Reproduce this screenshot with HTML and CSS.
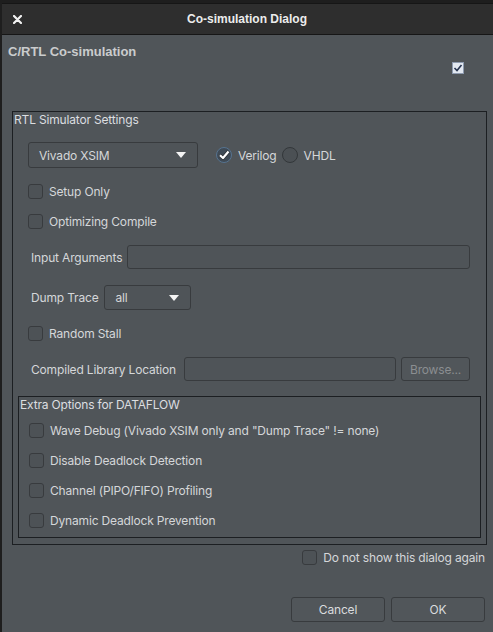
FILE: index.html
```html
<!DOCTYPE html>
<html>
<head>
<meta charset="utf-8">
<link rel="stylesheet" href="styles.css">
</head>
<body>
<div class="dialog">
  <div class="titlebar">
    <svg class="close" width="9" height="9" viewBox="0 0 9 9"><path d="M1 1 L8 8 M8 1 L1 8" stroke="#f2f2f2" stroke-width="2.2" stroke-linecap="round"/></svg>
    <span class="title">Co-simulation Dialog</span>
  </div>
  <div class="body">
    <h1 class="heading">C/RTL Co-simulation</h1>
    <div class="enable-row">
      <span class="mini-check"><svg width="10" height="10" viewBox="0 0 10 10"><path d="M1.5 5 L4 7.5 L8.5 2" fill="none" stroke="#27344f" stroke-width="1.6"/></svg></span>
    </div>
    <div class="group outer">
      <div class="legend">RTL Simulator Settings</div>
      <div class="row sim-row">
        <div class="combo sim-combo"><span>Vivado XSIM</span><span class="arrow"></span></div>
        <span class="radio checked"><svg width="14" height="14" viewBox="0 0 14 14"><path d="M3 7.2 L6 10 L11.5 3.5" fill="none" stroke="#2b2f33" stroke-width="3.6" stroke-linejoin="round"/><path d="M3 7.2 L6 10 L11.5 3.5" fill="none" stroke="#ffffff" stroke-width="2.2" stroke-linejoin="round"/></svg></span>
        <span class="radio-label">Verilog</span>
        <span class="radio"></span>
        <span class="radio-label">VHDL</span>
      </div>
      <label class="row check-row r-setup"><span class="box"></span><span>Setup Only</span></label>
      <label class="row check-row r-opt"><span class="box"></span><span>Optimizing Compile</span></label>
      <div class="row field-row r-args">
        <span class="label">Input Arguments</span>
        <span class="input grow"></span>
      </div>
      <div class="row field-row r-dump">
        <span class="label">Dump Trace</span>
        <div class="combo dump-combo"><span>all</span><span class="arrow"></span></div>
      </div>
      <label class="row check-row r-stall"><span class="box"></span><span>Random Stall</span></label>
      <div class="row field-row r-lib">
        <span class="label">Compiled Library Location</span>
        <span class="input lib-input"></span>
        <span class="btn browse">Browse...</span>
      </div>
      <div class="group inner">
        <div class="legend">Extra Options for DATAFLOW</div>
        <label class="row check-row inner-first"><span class="box"></span><span>Wave Debug (Vivado XSIM only and "Dump Trace" != none)</span></label>
        <label class="row check-row inner-next"><span class="box"></span><span>Disable Deadlock Detection</span></label>
        <label class="row check-row inner-next"><span class="box"></span><span>Channel (PIPO/FIFO) Profiling</span></label>
        <label class="row check-row inner-next"><span class="box"></span><span>Dynamic Deadlock Prevention</span></label>
      </div>
    </div>
    <label class="row check-row dont-show"><span class="box"></span><span>Do not show this dialog again</span></label>
    <div class="buttons">
      <span class="btn action">Cancel</span>
      <span class="btn action">OK</span>
    </div>
  </div>
</div>
</body>
</html>
```
FILE: styles.css
```css
html, body {
  margin: 0;
  padding: 0;
  background: #1e1e1e;
  height: 100%;
  overflow: hidden;
}
body {
  font-family: "Inter", "Noto Sans", sans-serif;
  font-size: 12px;
  letter-spacing: -0.17px;
  color: #d5d7d9;
}
.dialog {
  margin: 3px 0 0 2px;
  height: 629px;
  background: #505559;
  display: flex;
  flex-direction: column;
}
.titlebar {
  height: 30px;
  border-top: 1px solid #161616;
  border-bottom: 1px solid #161616;
  background: #2e2e2e;
  display: flex;
  align-items: center;
  justify-content: center;
  position: relative;
}
.close {
  position: absolute;
  left: 11px;
  top: 11px;
}
.title {
  font-family: "Liberation Sans", Arial, sans-serif;
  font-weight: bold;
  font-size: 12px;
  letter-spacing: 0;
  color: #ececec;
  margin-left: -1px;
}
.body {
  flex: 1;
  display: flex;
  flex-direction: column;
}
.heading {
  margin: 9px 0 0 6px;
  font-family: "Liberation Sans", Arial, sans-serif;
  font-weight: bold;
  font-size: 13px;
  letter-spacing: 0;
  line-height: 16px;
  color: #cacccd;
}
.enable-row {
  display: flex;
  justify-content: flex-end;
  margin: 2px 29px 0 0;
}
.mini-check {
  width: 10px;
  height: 10px;
  border: 1px solid #8e9bb0;
  background: #e2e8f1;
  display: flex;
  align-items: center;
  justify-content: center;
}
.group {
  border: 1px solid #1c1f22;
  display: flex;
  flex-direction: column;
}
.outer {
  margin: 37px 6px 0 10px;
  height: 432px;
}
.inner {
  margin: 15px 5px 0 5px;
  height: 140px;
}
.legend {
  line-height: 15px;
  padding-left: 1px;
  color: #dcdee0;
}
.row {
  display: flex;
  align-items: center;
}
.sim-row {
  margin: 15px 0 0 15px;
  height: 26px;
}
.combo {
  box-sizing: border-box;
  border: 1px solid #383b3e;
  border-radius: 3px;
  background: #4f5458;
  display: flex;
  align-items: center;
  justify-content: space-between;
  padding: 0 11px 0 10px;
}
.sim-combo {
  width: 170px;
  height: 26px;
}
.dump-combo {
  width: 87px;
  height: 25px;
  margin-left: 6px;
}
.arrow {
  width: 0;
  height: 0;
  border-left: 5.5px solid transparent;
  border-right: 5.5px solid transparent;
  border-top: 6px solid #f4f4f4;
}
.radio {
  box-sizing: border-box;
  width: 16px;
  height: 16px;
  border-radius: 50%;
  border: 1px solid #33373a;
  background: #4b5054;
  display: flex;
  align-items: center;
  justify-content: center;
}
.radio.checked {
  margin-left: 18px;
  border: 1.5px solid #567390;
  background: #3f4a55;
}
.radio-label {
  margin-left: 6px;
  margin-right: 5px;
}
.check-row {
  height: 20px;
  margin-left: 15px;
}
.box {
  box-sizing: border-box;
  width: 15px;
  height: 15px;
  border: 1px solid #383b3e;
  border-radius: 3px;
  background: #4d5256;
  margin-right: 6px;
  flex: none;
}
.r-setup { margin-top: 13px; }
.r-opt { margin-top: 10px; }
.field-row {
  margin-left: 18px;
  height: 24px;
}
.label { margin-right: 5px; }
.r-args { margin-top: 14px; }
.r-dump { margin-top: 16px; height: 25px; }
.r-dump .label { margin-right: 0; }
.r-stall { margin-top: 13px; }
.r-lib { margin-top: 14px; }
.r-lib .label { margin-right: 8px; }
.input {
  box-sizing: border-box;
  height: 24px;
  border: 1px solid #383b3e;
  border-radius: 3px;
  background: #4f5458;
}
.grow {
  flex: 1;
  margin-right: 16px;
}
.lib-input {
  width: 212px;
}
.btn {
  box-sizing: border-box;
  border: 1px solid #383b3e;
  border-radius: 3px;
  background: #51565a;
  display: flex;
  align-items: center;
  justify-content: center;
}
.browse {
  width: 69px;
  height: 24px;
  margin-left: 5px;
  color: #8b8e91;
}
.inner .legend {
  line-height: 14px;
  padding-top: 1px;
}
.inner .check-row {
  margin-left: 10px;
}
.inner-first { margin-top: 8px; }
.inner-next { margin-top: 10px; }
.dont-show {
  align-self: flex-end;
  margin: 2px 8px 0 0;
  height: 20px;
}
.dont-show .box {
  margin-right: 6px;
}
.buttons {
  display: flex;
  justify-content: flex-end;
  gap: 6px;
  margin: 30px 8px 0 0;
}
.action {
  width: 94px;
  height: 25px;
  color: #dadcde;
}
```
